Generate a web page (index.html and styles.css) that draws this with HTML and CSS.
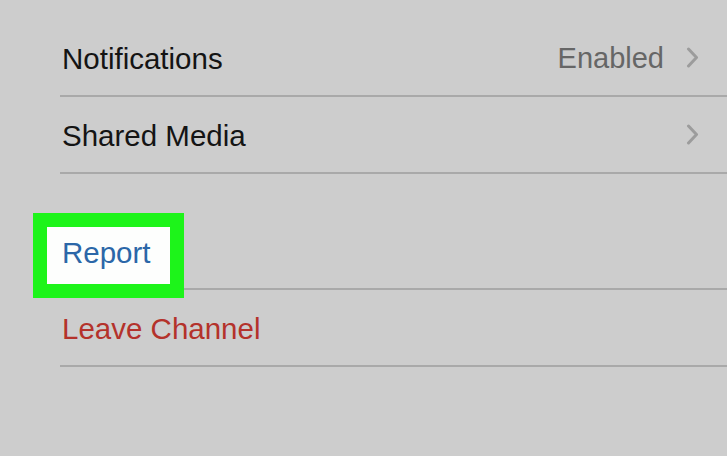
FILE: index.html
```html
<!DOCTYPE html>
<html>
<head>
<meta charset="utf-8">
<link rel="stylesheet" href="styles.css">
</head>
<body>
<div class="screen">
  <div class="group first">
    <div class="row">
      <span class="label">Notifications</span>
      <span class="detail">Enabled</span>
      <svg class="chev" width="13" height="21" viewBox="0 0 13 21"><path d="M2.5 2 L10.5 10.5 L2.5 19" fill="none" stroke="#9c9c9c" stroke-width="3" stroke-linecap="round" stroke-linejoin="round"/></svg>
    </div>
    <div class="row">
      <span class="label">Shared Media</span>
      <span class="detail"></span>
      <svg class="chev" width="13" height="21" viewBox="0 0 13 21"><path d="M2.5 2 L10.5 10.5 L2.5 19" fill="none" stroke="#9c9c9c" stroke-width="3" stroke-linecap="round" stroke-linejoin="round"/></svg>
    </div>
  </div>
  <div class="group second">
    <div class="row report-row">
      <span class="highlight"></span>
      <span class="label report">Report</span>
    </div>
    <div class="row">
      <span class="label leave">Leave Channel</span>
    </div>
  </div>
</div>
</body>
</html>
```

FILE: styles.css
```css
html, body {
  margin: 0;
  padding: 0;
  background: #cdcdcd;
}
body {
  width: 727px;
  height: 456px;
  overflow: hidden;
  font-family: "Liberation Sans", Arial, sans-serif;
}
.screen {
  padding-left: 60px;
}
.group.first {
  padding-top: 20px;
}
.group.second {
  padding-top: 39px;
}
.row {
  position: relative;
  display: flex;
  align-items: center;
  height: 75px;
  border-bottom: 2px solid #a9a9a9;
  padding-left: 2px;
  padding-right: 28px;
}
.label {
  position: relative;
  z-index: 1;
  font-size: 29.5px;
  color: #141414;
  flex: 1;
  padding-top: 2px;
}
.detail {
  font-size: 29px;
  color: #666;
  margin-right: 22px;
  padding-top: 2px;
}
.chev {
  display: block;
}
.report {
  color: #2b67a8;
  padding-top: 5px;
}
.leave {
  color: #b4322b;
}
.highlight {
  position: absolute;
  left: -27px;
  top: 0;
  width: 123px;
  height: 57px;
  border: 14px solid #1df41a;
  background: #fdfefd;
  z-index: 0;
}
```
